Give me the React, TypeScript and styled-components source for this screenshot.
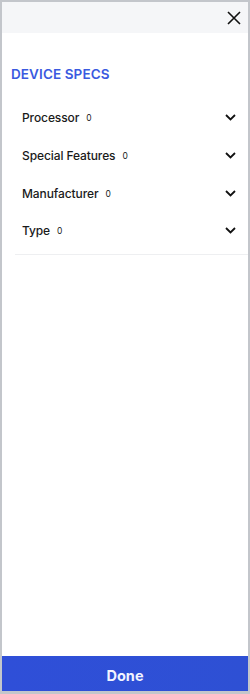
import React from "react";
import styled, { createGlobalStyle } from "styled-components";

const Global = createGlobalStyle`
  html, body { margin: 0; padding: 0; background: #fff; }
  * { box-sizing: border-box; }
`;

const Frame = styled.div`
  width: 250px;
  height: 694px;
  border: 2px solid #c3c6cb;
  border-bottom-width: 3px;
  display: flex;
  flex-direction: column;
  background: #fff;
  font-family: "Inter", "Noto Sans", sans-serif;
`;

const Header = styled.div`
  height: 31px;
  background: #f5f6f8;
  display: flex;
  justify-content: flex-end;
  align-items: center;
  padding-right: 6px;
`;

const CloseBtn = styled.button`
  border: 0;
  background: none;
  padding: 0;
  width: 16px;
  height: 16px;
  display: flex;
  color: #111;
`;

const Body = styled.div`
  flex: 1;
  display: flex;
  flex-direction: column;
`;

const Title = styled.h2`
  margin: 33px 0 18px 9px;
  font-size: 13.5px;
  font-weight: 600;
  letter-spacing: 0.1px;
  color: #3a5ae0;
  line-height: 16px;
`;

const List = styled.div`
  margin-left: 13px;
  border-bottom: 1px solid #eeeff1;
  padding-bottom: 4px;
`;

const Row = styled.div`
  height: 37.7px;
  display: flex;
  align-items: center;
  padding-left: 7px;
  padding-right: 12px;
  &:first-child { margin-top: -1px; }
`;

const Label = styled.span`
  font-size: 12px;
  font-weight: 500;
  color: #1a1a1a;
  letter-spacing: -0.1px;
`;

const Count = styled.span`
  font-size: 8.5px;
  color: #222;
  margin-left: 7px;
  margin-top: 1px;
`;

const Chevron = styled.svg`
  margin-left: auto;
`;

const DoneButton = styled.button`
  height: 35px;
  border: 0;
  background: linear-gradient(90deg, #2f4fd8, #2e50d4);
  color: #f2f4ff;
  font-family: "Inter", "Noto Sans", sans-serif;
  font-weight: 700;
  font-size: 14.5px;
  padding: 3px 0 0;
`;

const items = ["Processor", "Special Features", "Manufacturer", "Type"];

export default function App() {
  return (
    <>
      <Global />
      <Frame>
        <Header>
          <CloseBtn aria-label="close">
            <svg width="16" height="16" viewBox="0 0 16 16">
              <path d="M2 2 L14 14 M14 2 L2 14" stroke="#111" strokeWidth="1.6" />
            </svg>
          </CloseBtn>
        </Header>
        <Body>
          <Title>DEVICE SPECS</Title>
          <List>
            {items.map((t) => (
              <Row key={t}>
                <Label>{t}</Label>
                <Count>0</Count>
                <Chevron width="11" height="7" viewBox="0 0 11 7">
                  <path d="M1 1 L5.5 5.5 L10 1" fill="none" stroke="#111" strokeWidth="1.8" />
                </Chevron>
              </Row>
            ))}
          </List>
        </Body>
        <DoneButton>Done</DoneButton>
      </Frame>
    </>
  );
}
